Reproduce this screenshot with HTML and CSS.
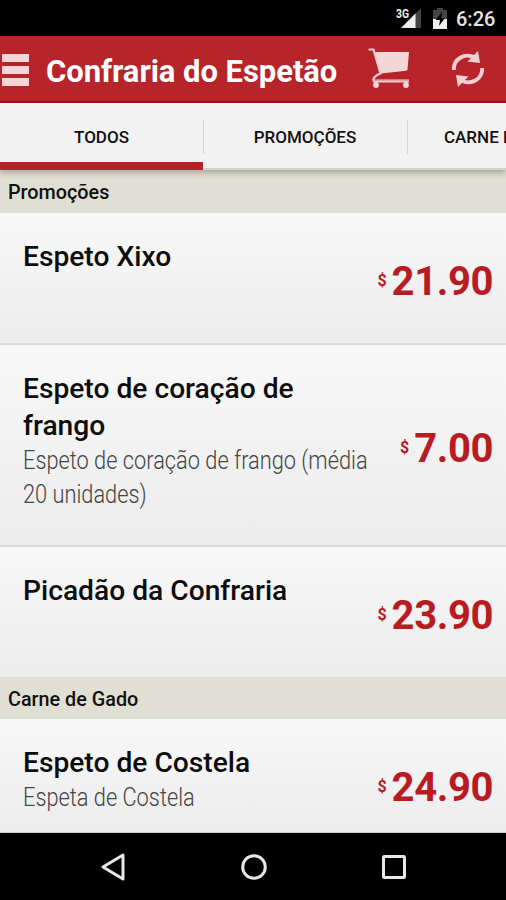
FILE: index.html
```html
<!DOCTYPE html>
<html lang="pt-BR">
<head>
<meta charset="utf-8">
<title>Confraria do Espetão</title>
<link rel="stylesheet" href="styles.css">
</head>
<body>
<div class="screen">
  <div class="status">
    <svg class="signal" width="28" height="24" viewBox="0 0 28 24"><path d="M6 22 26 2V22Z" fill="#444"/><path d="M6 22 20.500 7.500V22Z" fill="#eee"/><text class="network" x="1" y="12" textLength="13" lengthAdjust="spacingAndGlyphs">3G</text></svg>
    <svg class="battery" width="14" height="21" viewBox="0 0 14 21"><path d="M4 0h6v2h4v9H0V2h4Z" fill="#444"/><path d="M0 11h14v10H0Z" fill="#eee"/><path d="M9 4 2.500 12H7l-1 6 6-8H8Z" fill="#000"/></svg>
    <span class="clock">6:26</span>
  </div>
  <header class="bar">
    <div class="menu"><i></i><i></i><i></i></div>
    <h1>Confraria do Espetão</h1>
    <svg class="cart" width="42" height="41" viewBox="0 0 42 41"><path d="M6 4H41L39.500 21.500Q39 22.500 38 22.700L13 25.500Z" fill="#f5d6d8"/><g fill="none" stroke="#f5cdd0" stroke-width="2.200"><path d="M.5 1.500H5.500L12.500 25.500C7 27.500 4 31 6 33.500H41"/><path d="M6 32H41" stroke-width="1"/></g><circle cx="8" cy="37" r="2.900" fill="#f5d6d8"/><circle cx="38" cy="37" r="2.900" fill="#f5d6d8"/></svg>
    <svg class="refresh" width="34" height="36" viewBox="0 0 34 36"><g fill="none" stroke="#f5d0d2" stroke-width="3.800"><path d="M2.800 19C2.500 8 13 1.500 24 6.500"/><path d="M31.200 17C31.500 28 21 34.500 10 29.500"/></g><path d="M27 0 29 12 16.500 10.500Z" fill="#f5d0d2"/><path d="M7 36 5 24 17.500 25.500Z" fill="#f5d0d2"/></svg>
  </header>
  <nav class="tabs">
    <div class="tab active">TODOS</div>
    <div class="tab">PROMOÇÕES</div>
    <div class="tab last">CARNE DE GADO</div>
  </nav>
  <main class="list">
    <h2 class="section shaded">Promoções</h2>
    <article class="item one">
      <div class="info"><h3>Espeto Xixo</h3></div>
      <div class="price"><small>$</small><b>21.90</b></div>
    </article>
    <article class="item two">
      <div class="info"><h3>Espeto de coração de<br>frango</h3><p>Espeto de coração de frango (média<br>20 unidades)</p></div>
      <div class="price"><small>$</small><b>7.00</b></div>
    </article>
    <article class="item three">
      <div class="info"><h3>Picadão da Confraria</h3></div>
      <div class="price"><small>$</small><b>23.90</b></div>
    </article>
    <h2 class="section">Carne de Gado</h2>
    <article class="item four">
      <div class="info"><h3>Espeto de Costela</h3><p>Espeta de Costela</p></div>
      <div class="price"><small>$</small><b>24.90</b></div>
    </article>
  </main>
  <footer class="system">
    <svg width="26" height="28" viewBox="0 0 26 28"><path d="M23 2V26L3 14Z"/></svg>
    <svg width="26" height="28" viewBox="0 0 26 28"><circle cx="13" cy="14" r="11.300"/></svg>
    <svg width="26" height="28" viewBox="0 0 26 28"><rect x="2.500" y="3.500" width="21" height="21" rx=".8"/></svg>
  </footer>
</div>
</body>
</html>
```
FILE: styles.css
```css
* { box-sizing: border-box; }
body { margin: 0; font-family: Roboto, sans-serif; }
h1, h2, h3, p { margin: 0; }
.screen { width: 506px; height: 900px; overflow: hidden; display: flex; flex-direction: column; background: #000; }
.status { height: 36px; display: flex; align-items: flex-start; background: #000; }
.signal { margin: 6px 0 0 395px; }
.network { font: 700 12px Roboto, sans-serif; fill: #eee; stroke: #000; stroke-width: .5px; paint-order: stroke; }
.battery { margin: 8px 0 0 10px; }
.clock { margin: 8px 0 0 9px; font-size: 20px; line-height: 23px; font-weight: 500; color: #e4e4e4; }
.bar { height: 67px; display: flex; align-items: flex-start; background: #b7252b; border-bottom: 2px solid #a90c10; }
.menu { flex: none; width: 27px; margin: 18px 17px 0 2px; display: flex; flex-direction: column; gap: 4px; }
.menu i { height: 8px; background: #f5d6d8; }
.bar h1 { flex: none; width: 293px; margin-top: 18px; font-size: 31px; line-height: 36px; letter-spacing: -.05px; font-weight: 700; color: #fff; white-space: nowrap; }
.bar svg { flex: none; }
.cart { margin: 12px 0 0 29px; }
.refresh { margin: 15px 0 0 41px; }
.tabs { height: 67px; display: flex; background: #f2f2f2; position: relative; z-index: 1; box-shadow: 0 2px 7px rgba(50,55,40,.4); border-bottom: 2px solid #d3d4ca; }
.tab { position: relative; flex: 0 0 204px; height: 67px; display: flex; justify-content: center; padding-top: 24px; font-size: 17px; line-height: 20px; font-weight: 500; color: #111; white-space: nowrap; }
.tab:not(.last)::after { content: ""; position: absolute; right: -1px; top: 17px; width: 1px; height: 34px; background: #d7d7d7; }
.active { border-bottom: 8px solid #b71f27; flex-basis: 203px; }
.last { justify-content: flex-start; padding-left: 37px; }
.list { flex: 0 0 663px; display: flex; flex-direction: column; }
.section { height: 42px; padding: 10px 0 0 8px; background: #dfdfd3; border-top: 1px solid #dbdcd9; font-size: 19.8px; line-height: 23px; font-weight: 500; color: #111; }
.section.shaded { height: 43px; }
.item { display: flex; justify-content: space-between; padding: 25px 13px 0 23px; background: linear-gradient(#f8f8f8, #ececec); border-bottom: 2px solid #d9dbda; }
.info { width: 350px; flex: none; }
.one { height: 132px; }
.two { height: 202px; }
.three { height: 130px; border: 0; }
.four { height: 114px; border-bottom: 1px solid #ccc; }
h3 { font-size: 28.2px; line-height: 37px; font-weight: 500; color: #0d0d0d; }
p { width: max-content; margin-top: -1px; font-size: 26px; line-height: 34px; font-weight: 300; color: #444; transform: scaleX(.838); transform-origin: left; }
.price { display: flex; flex: 1; justify-content: flex-end; align-items: flex-start; color: #b81b22; }
.price b { font-size: 40px; line-height: 48px; letter-spacing: -.4px; font-weight: 700; margin-top: 20px; }
.price small { font-size: 16px; line-height: 21px; font-weight: 700; margin: 32px 5px 0 0; }
.two .price { padding-top: 35px; }
.system { height: 67px; display: flex; justify-content: space-between; padding: 20px 99px 0 100px; background: #000; }
.system svg { fill: none; stroke: #e8e8e8; stroke-width: 3; stroke-linejoin: round; }
```
